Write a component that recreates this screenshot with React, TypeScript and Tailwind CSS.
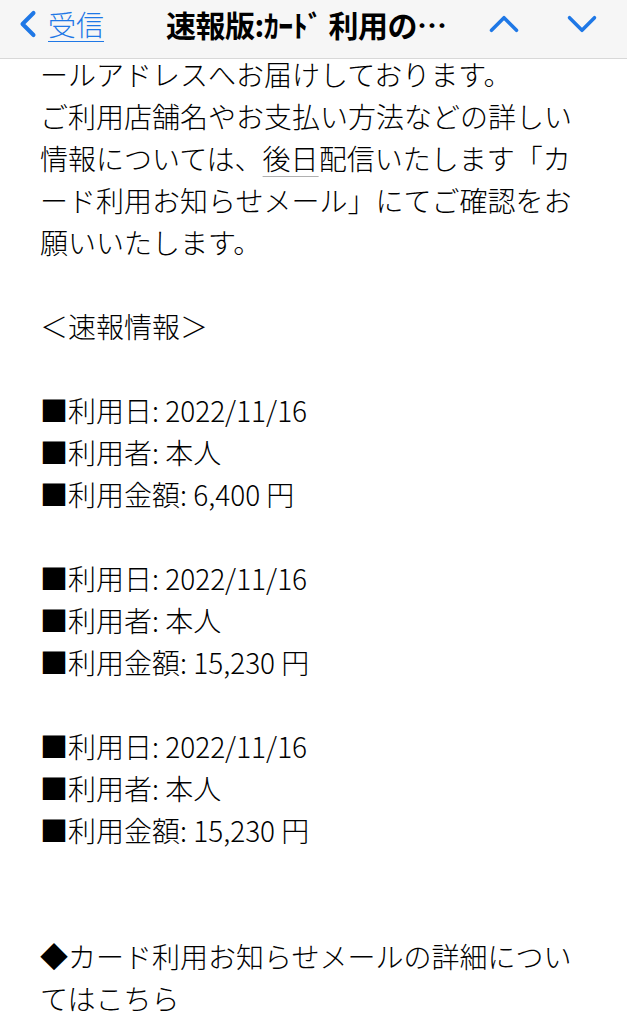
import { ChevronLeft, ChevronUp, ChevronDown } from 'lucide-react'

const LINES: string[] = [
  'ールアドレスへお届けしております。',
  'ご利用店舗名やお支払い方法などの詳しい',
  '__LINK__',
  'ード利用お知らせメール」にてご確認をお',
  '願いいたします。',
  '',
  '＜速報情報＞',
  '',
  '■利用日: 2022/11/16',
  '■利用者: 本人',
  '■利用金額: 6,400 円',
  '',
  '■利用日: 2022/11/16',
  '■利用者: 本人',
  '■利用金額: 15,230 円',
  '',
  '■利用日: 2022/11/16',
  '■利用者: 本人',
  '■利用金額: 15,230 円',
  '',
  '',
  '◆カード利用お知らせメールの詳細につい',
  'てはこちら',
]

export default function App() {
  return (
    <div
      className="w-[627px] h-[1024px] overflow-hidden bg-white text-black"
      style={{ fontFamily: '"Noto Sans CJK JP", "Noto Sans", sans-serif' }}
    >
      {/* Nav bar */}
      <div className="relative z-10 h-[59px] pb-[11px] bg-[#f6f6f6] border-b border-[#d8d8d8] flex items-center">
        <div className="flex items-center pl-[6px] w-[160px] text-[#1f78e6]">
          <ChevronLeft className="w-[44px] h-[44px] -mr-[2px]" strokeWidth={2.2} />
          <span className="text-[28px] font-light underline underline-offset-[5px] decoration-1 leading-none">受信</span>
        </div>
        <div className="flex-1 text-[30px] font-bold leading-none tracking-[-0.5px] whitespace-nowrap pl-[6px]">
          速報版:ｶｰﾄﾞ 利用の…
        </div>
        <div className="flex items-center gap-[28px] pr-[20px] text-[#1f78e6]">
          <ChevronUp className="w-[50px] h-[50px]" strokeWidth={1.7} />
          <ChevronDown className="w-[50px] h-[50px]" strokeWidth={1.7} />
        </div>
      </div>

      {/* Mail body */}
      <div className="-mt-[6px] pl-[40px] pr-[20px] text-[28px] font-light leading-[42px] whitespace-nowrap">
        {LINES.map((line, i) =>
          line === '__LINK__' ? (
            <div key={i}>
              情報については、
              <span className="underline decoration-[#b0b0b0] decoration-1 underline-offset-[6px]">後日</span>
              配信いたします「カ
            </div>
          ) : (
            <div key={i} className="h-[42px]">
              {line}
            </div>
          )
        )}
      </div>
    </div>
  )
}
